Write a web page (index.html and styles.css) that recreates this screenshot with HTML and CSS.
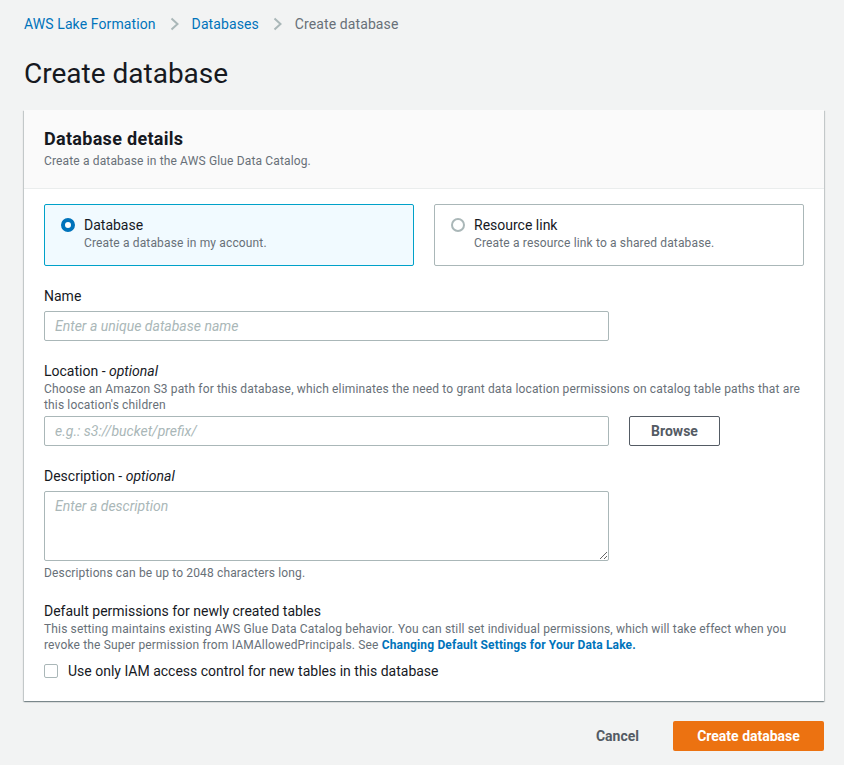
FILE: index.html
```html
<!DOCTYPE html>
<html lang="en">
<head>
<meta charset="utf-8">
<title>Create database</title>
<link rel="stylesheet" href="styles.css">
</head>
<body>
<div class="page">
  <nav class="crumbs">
    <a class="crumb-link" href="#">AWS Lake Formation</a>
    <svg class="chev" viewBox="0 0 16 16" width="16" height="16"><path d="M5.5 2.5l6 5.5-6 5.5" fill="none" stroke="#aab7b8" stroke-width="2"/></svg>
    <a class="crumb-link" href="#">Databases</a>
    <svg class="chev" viewBox="0 0 16 16" width="16" height="16"><path d="M5.5 2.5l6 5.5-6 5.5" fill="none" stroke="#aab7b8" stroke-width="2"/></svg>
    <span class="crumb-current">Create database</span>
  </nav>

  <h1 class="title">Create database</h1>

  <section class="card">
    <header class="card-head">
      <h2 class="card-title">Database details</h2>
      <p class="card-sub">Create a database in the AWS Glue Data Catalog.</p>
    </header>
    <div class="card-body">
      <div class="tiles">
        <label class="tile tile-on">
          <span class="radio radio-on"></span>
          <span class="tile-text">
            <span class="tile-label">Database</span>
            <span class="tile-desc">Create a database in my account.</span>
          </span>
        </label>
        <label class="tile">
          <span class="radio"></span>
          <span class="tile-text">
            <span class="tile-label">Resource link</span>
            <span class="tile-desc">Create a resource link to a shared database.</span>
          </span>
        </label>
      </div>

      <div class="field">
        <div class="label">Name</div>
        <input class="input" type="text" placeholder="Enter a unique database name">
      </div>

      <div class="field">
        <div class="label">Location - <i>optional</i></div>
        <div class="hint">Choose an Amazon S3 path for this database, which eliminates the need to grant data location permissions on catalog table paths that are this location's children</div>
        <div class="row">
          <input class="input" type="text" placeholder="e.g.: s3://bucket/prefix/">
          <button class="btn">Browse</button>
        </div>
      </div>

      <div class="field">
        <div class="label">Description - <i>optional</i></div>
        <textarea class="input area" placeholder="Enter a description"></textarea>
        <div class="help">Descriptions can be up to 2048 characters long.</div>
      </div>

      <div class="field">
        <div class="label">Default permissions for newly created tables</div>
        <div class="hint">This setting maintains existing AWS Glue Data Catalog behavior. You can still set individual permissions, which will take effect when you revoke the Super permission from IAMAllowedPrincipals. See <a class="strong-link" href="#">Changing Default Settings for Your Data Lake.</a></div>
        <label class="check-row">
          <span class="check"></span>
          <span>Use only IAM access control for new tables in this database</span>
        </label>
      </div>
    </div>
  </section>

  <div class="actions">
    <button class="btn-link">Cancel</button>
    <button class="btn-primary">Create database</button>
  </div>
</div>
</body>
</html>
```

FILE: styles.css
```css
* { box-sizing: border-box; }
html, body { margin: 0; padding: 0; }
body {
  background: #f2f3f3;
  font-family: Roboto, "Liberation Sans", Arial, sans-serif;
  color: #16191f;
  font-size: 14px;
  line-height: 20px;
}
.page {
  padding: 14px 20px 14px 24px;
}
.crumbs {
  display: flex;
  align-items: center;
  height: 20px;
  font-size: 14px;
  letter-spacing: 0.1px;
}
.crumb-link { color: #0073bb; text-decoration: none; }
.crumb-current { color: #687078; }
.chev { margin: 0 10px; }
.title {
  margin: 23px 0 0;
  font-size: 28px;
  line-height: 34px;
  font-weight: 400;
  color: #16191f;
}
.card {
  margin-top: 19px;
  background: #fff;
  box-shadow: 0 1px 1px 0 rgba(0,28,36,.3), 1px 1px 1px 0 rgba(0,28,36,.15), -1px 1px 1px 0 rgba(0,28,36,.15);
}
.card-head {
  background: #fafafa;
  border-bottom: 1px solid #eaeded;
  padding: 18px 20px 19px;
}
.card-title {
  margin: 0;
  font-size: 18px;
  line-height: 22px;
  font-weight: 700;
  letter-spacing: 0.3px;
}
.card-sub {
  margin: 3px 0 0;
  font-size: 12px;
  line-height: 16px;
  color: #687078;
  letter-spacing: 0.15px;
}
.card-body {
  padding: 15px 20px 20px;
}
.tiles {
  display: grid;
  grid-template-columns: 1fr 1fr;
  gap: 20px;
}
.tile {
  display: flex;
  align-items: flex-start;
  gap: 9px;
  border: 1px solid #aab7b8;
  border-radius: 2px;
  padding: 10px 17px 14px 16px;
  background: #fff;
}
.tile-on {
  border-color: #00a1c9;
  background: #f1faff;
}
.radio {
  flex: none;
  width: 14px;
  height: 14px;
  margin-top: 3px;
  border-radius: 50%;
  border: 2px solid #aab7b8;
  background: #fff;
}
.radio-on {
  border: 4px solid #0073bb;
}
.tile-text { display: flex; flex-direction: column; }
.tile-label { font-size: 14px; line-height: 20px; }
.tile-desc { font-size: 12px; line-height: 16px; color: #687078; letter-spacing: 0.15px; }
.field { margin-top: 20px; }
.label { font-size: 14px; line-height: 20px; }
.hint {
  font-size: 12px;
  line-height: 16px;
  color: #687078;
  letter-spacing: 0.15px;
}
.input {
  display: block;
  width: 565px;
  height: 30px;
  margin-top: 5px;
  border: 1px solid #aab7b8;
  border-radius: 2px;
  padding: 4px 10px;
  font-family: inherit;
  font-size: 14px;
  color: #16191f;
  background: #fff;
}
.input::placeholder { color: #aab7b8; font-style: italic; }
.row {
  display: flex;
  align-items: center;
  gap: 20px;
  margin-top: 3px;
}
.row .input { margin-top: 0; }
.btn {
  width: 91px;
  height: 30px;
  border: 1px solid #545b64;
  border-radius: 2px;
  background: #fff;
  color: #545b64;
  font-family: inherit;
  font-weight: 700;
  font-size: 14px;
}
.area {
  height: 70px;
  resize: vertical;
  padding: 6px 10px;
}
.help {
  margin-top: 4px;
  font-size: 12px;
  line-height: 16px;
  color: #687078;
  letter-spacing: 0.15px;
}
.strong-link { color: #0073bb; font-weight: 700; text-decoration: none; }
.check-row {
  display: flex;
  align-items: center;
  gap: 10px;
  margin-top: 8px;
}
.check {
  width: 14px;
  height: 14px;
  border: 1px solid #aab7b8;
  border-radius: 2px;
  background: #fff;
}
.actions {
  display: flex;
  justify-content: flex-end;
  align-items: center;
  gap: 14px;
  margin-top: 20px;
}
.btn-link {
  border: 0;
  background: none;
  color: #545b64;
  font-family: inherit;
  font-weight: 700;
  font-size: 14px;
  height: 30px;
  padding: 0 20px;
}
.btn-primary {
  height: 30px;
  width: 151px;
  border: 0;
  border-radius: 2px;
  background: #ec7211;
  color: #fff;
  font-family: inherit;
  font-weight: 700;
  font-size: 14px;
}
```
